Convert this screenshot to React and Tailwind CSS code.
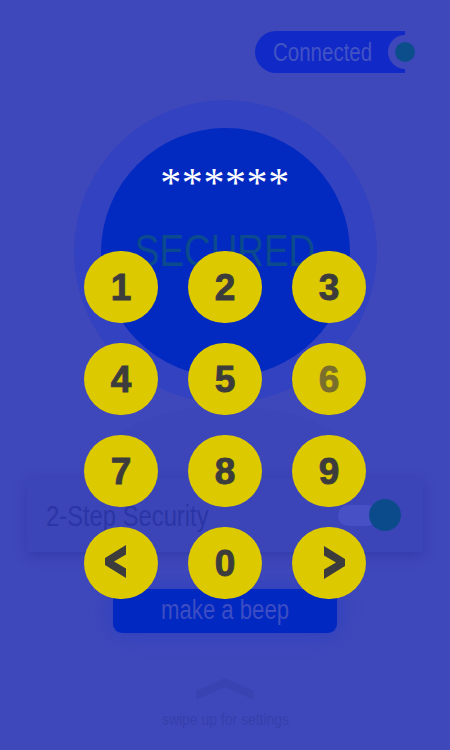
import React from "react";

const sans = { fontFamily: '"Liberation Sans", Arial, sans-serif' };

function Key({ children, dim }) {
  return (
    <div
      className={`w-[74px] h-[72px] rounded-full bg-[#dcc900] flex items-center justify-center font-bold text-[37px] leading-none ${dim ? "text-[#7a6e2c] [-webkit-text-stroke:0.9px_#7a6e2c]" : "text-[#3c3c3c] [-webkit-text-stroke:0.9px_#3c3c3c]"}`}
      style={sans}
    >
      {children}
    </div>
  );
}

function ChevLeft() {
  return (
    <svg width="22" height="33" viewBox="0 0 22 33" className="mr-[10px] mt-[-3px]">
      <polygon points="21,0 21,9.5 9,16.5 21,23.5 21,33 0,20 0,13" fill="#3c3c3c" />
    </svg>
  );
}

function ChevRight() {
  return (
    <svg width="22" height="33" viewBox="0 0 22 33" className="ml-[10px] mt-[-1px]">
      <polygon points="1,0 1,9.5 13,16.5 1,23.5 1,33 22,20 22,13" fill="#3c3c3c" />
    </svg>
  );
}

export default function App() {
  return (
    <div className="relative w-[450px] h-[750px] overflow-hidden bg-[#3f48bb] flex flex-col" style={sans}>
      {/* Connected toggle */}
      <div className="relative ml-[255px] mt-[31px] w-[150px] h-[42px] rounded-l-full bg-[#1129c7] flex items-center pl-[18px]">
        <span className="inline-block origin-left scale-x-[0.82] text-[25px] leading-none text-[#4253c4] whitespace-nowrap">Connected</span>
        <div className="absolute right-[-17px] top-[4px] w-[34px] h-[34px] rounded-full bg-[#3f48bb] flex items-center justify-center">
          <div className="w-[20px] h-[20px] rounded-full bg-[#0c4e8b]" />
        </div>
      </div>

      {/* big circle */}
      <div className="mx-auto mt-[27px] w-[303px] h-[303px] rounded-full bg-[#3242c1] flex items-center justify-center">
        <div className="w-[249px] h-[249px] mt-[1px] rounded-full bg-[#0229c0] flex flex-col items-center">
          <div
            className="mt-[34px] text-white text-[42px] leading-none tracking-[0.6px]"
            style={{ fontFamily: '"Liberation Serif", "Times New Roman", serif' }}
          >
            ******
          </div>
          <div className="mt-[24px] inline-block scale-x-[0.82] text-[45px] leading-none text-[#0b4a8f] whitespace-nowrap">SECURED</div>
        </div>
      </div>

      {/* faint ellipse */}
      <div className="absolute left-[95px] top-[406px] w-[265px] h-[130px] rounded-[50%] bg-[#3c46b9]" />

      {/* 2-step card */}
      <div className="relative mx-[27px] mt-[75px] h-[74px] bg-[#3c45b7] shadow-[0_4px_12px_rgba(20,25,120,0.25)] flex items-center justify-between pl-[19px] pr-[22px]">
        <span className="inline-block origin-left scale-x-[0.82] text-[29px] leading-none text-[#2b35a5] mt-[2px] whitespace-nowrap">2-Step Security</span>
        <div className="relative w-[63px] h-[32px] flex items-center">
          <div className="w-[40px] h-[21px] rounded-full bg-[#4750c5]" />
          <div className="absolute right-0 top-0 w-[32px] h-[32px] rounded-full bg-[#0c4b8b]" />
        </div>
      </div>

      {/* beep button */}
      <div className="mx-auto mt-[37px] w-[224px] h-[44px] rounded-[9px] bg-[#0228c2] shadow-[0_0_22px_rgba(10,45,200,0.35)] flex items-center justify-center">
        <span className="inline-block scale-x-[0.82] text-[27px] leading-none text-[#3d4dc3] mt-[-2px] whitespace-nowrap">make a beep</span>
      </div>

      {/* swipe */}
      <div className="flex flex-col items-center mt-[45px]">
        <svg width="58" height="24" viewBox="0 0 58 24">
          <polygon points="0,13 29,0 58,13 58,22 29,9 0,22" fill="#3a43b2" />
        </svg>
        <span className="inline-block scale-x-[0.82] mt-[9px] text-[17px] leading-none text-[#3540ab] whitespace-nowrap">swipe up for settings</span>
      </div>

      {/* keypad overlay */}
      <div className="absolute left-[84px] top-[251px] grid grid-cols-[repeat(3,74px)] gap-x-[30px] gap-y-[20px]">
        <Key>1</Key>
        <Key>2</Key>
        <Key>3</Key>
        <Key>4</Key>
        <Key>5</Key>
        <Key dim>6</Key>
        <Key>7</Key>
        <Key>8</Key>
        <Key>9</Key>
        <Key><ChevLeft /></Key>
        <Key>0</Key>
        <Key><ChevRight /></Key>
      </div>
    </div>
  );
}
